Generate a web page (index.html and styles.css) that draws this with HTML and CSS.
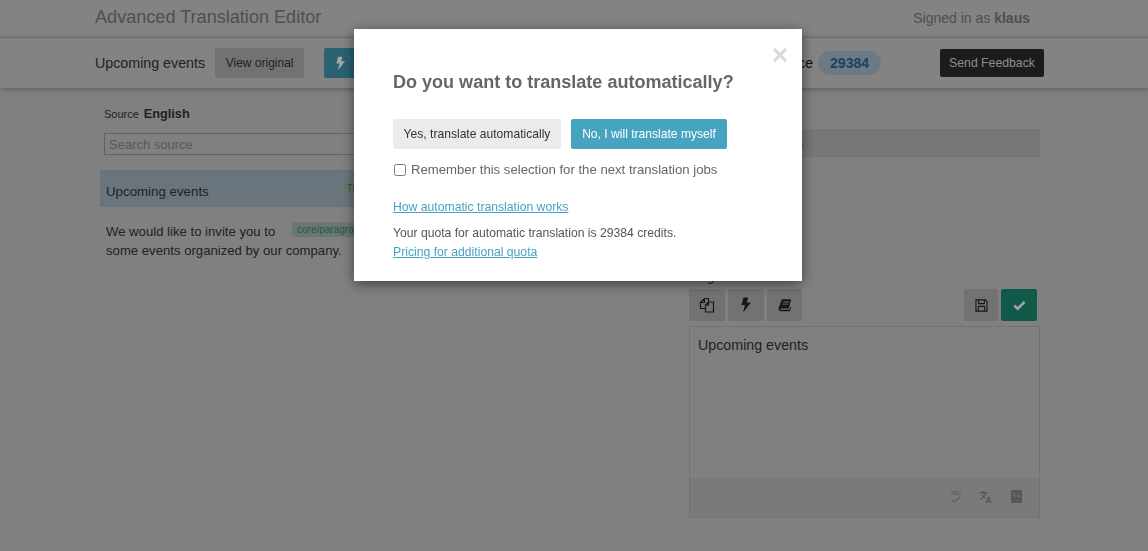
FILE: index.html
```html
<!DOCTYPE html>
<html lang="en">
<head>
    <meta charset="UTF-8">
    <meta name="viewport" content="width=device-width, initial-scale=1.0">
    <title>Advanced Translation Editor</title>
    <link rel="stylesheet" href="styles.css">
</head>
<body>
    <header class="top-header">
        <h1 class="app-title">Advanced Translation Editor</h1>
        <p class="signed-in">Signed in as <strong>klaus</strong></p>
    </header>

    <section class="job-bar">
        <div class="job-left">
            <span class="job-name">Upcoming events</span>
            <button class="btn btn-grey">View original</button>
            <button class="btn btn-auto">
                <svg class="icon-light" viewBox="0 0 12 16" width="11" height="15"><path d="M8 0.500H3.500L1.500 8H5L3 15.500 11 5.500H6.800z"/></svg>
                Translate
            </button>
        </div>
        <div class="job-right">
            <span class="quota-label">Balance</span>
            <span class="quota-pill">29384</span>
            <button class="btn btn-dark">Send Feedback</button>
        </div>
    </section>

    <main class="workspace">
        <section class="source-col">
            <div class="source-head">
                <span class="source-label">Source</span>
                <strong class="source-lang">English</strong>
            </div>
            <input class="search" type="text" placeholder="Search source">
            <div class="segment segment-active">
                <span>Upcoming events</span>
                <span class="tag tag-title">Title</span>
            </div>
            <div class="segment">
                <span class="segment-text">We would like to invite you to<br>some events organized by our company.</span>
                <span class="tag">core/paragraph</span>
            </div>
        </section>

        <section class="target-col">
            <div class="target-bar"><a href="#">Suggestions</a></div>
            <p class="target-label">Target</p>
            <div class="tools">
                <div class="tools-group">
                    <button class="tool">
                        <svg viewBox="0 0 16 16" width="16" height="16"><path class="stroke" d="M5.500 1.500H9.500V5M5.500 1.500 1.500 5.500V11.500H6.500M5.500 1.500V5.500H1.500M9.500 5H14.500V15H6.500V8zM9.500 5V8H6.500"/></svg>
                    </button>
                    <button class="tool">
                        <svg viewBox="0 0 12 16" width="12" height="16"><path d="M8 0.500H3.500L1.500 8H5L3 15.500 11 5.500H6.800z"/></svg>
                    </button>
                    <button class="tool tool-narrow">
                        <svg viewBox="0 0 16 16" width="14" height="14"><path d="M4.500 1.500H15l-2.800 10.500H3.400c-.9 0-1 1.500 0 1.500H13l1-3.500 1 .5-1.500 4.500H2.700C1 14.500.3 13 .8 11zM6 4v1h6.300l.3-1zM5.300 6.500v1h6.300l.3-1z"/></svg>
                    </button>
                </div>
                <div class="tools-group">
                    <button class="tool tool-save">
                        <svg viewBox="0 0 14 14" width="13" height="13"><path class="stroke" d="M1 1h10l2 2v10H1zM4 1v4h6V1M3.500 13V8h7v5"/></svg>
                    </button>
                    <button class="tool tool-ok">
                        <svg class="icon-light" viewBox="0 0 14 12" width="13" height="11"><path d="M5 11.500 0.500 7l2-2L5 7.500 11.500 1l2 2z"/></svg>
                    </button>
                </div>
            </div>
            <div class="editor">
                <div class="editor-text">Upcoming events</div>
                <div class="editor-foot">
                    <span class="spell"><small>ABC</small>
                        <svg viewBox="0 0 12 8" width="10" height="7"><path class="stroke" d="M1 4l3 3 7-6"/></svg>
                    </span>
                    <svg viewBox="0 0 16 16" width="14" height="14"><path class="stroke" d="M1 3h8M5 1v2M7.500 3C7 6 4.500 9 1.500 10.500M3 5c1 2 3 4 4.500 4.500M8 15l3-7 3 7M9 13h4"/></svg>
                    <span class="glossary">A-1</span>
                </div>
            </div>
        </section>
    </main>

    <div class="backdrop"></div>

    <div class="modal">
        <button class="modal-close" aria-label="Close">
            <svg viewBox="0 0 14 14" width="14" height="14"><path d="M1 1l12 12M13 1 1 13"/></svg>
        </button>
        <h2 class="modal-title">Do you want to translate automatically?</h2>
        <div class="modal-actions">
            <button class="btn btn-light">Yes, translate automatically</button>
            <button class="btn btn-blue">No, I will translate myself</button>
        </div>
        <label class="remember"><input type="checkbox"> Remember this selection for the next translation jobs</label>
        <a class="modal-link how" href="#">How automatic translation works</a>
        <p class="quota-text">Your quota for automatic translation is 29384 credits.</p>
        <a class="modal-link pricing" href="#">Pricing for additional quota</a>
    </div>
</body>
</html>
```

FILE: styles.css
```css
* {
    box-sizing: border-box;
}

html, body {
    height: 100%;
}

body {
    margin: 0;
    background-color: #c5c5c5;
    color: #333;
    font-family: "Liberation Sans", Arial, sans-serif;
    font-size: 14px;
    overflow: hidden;
}

button {
    font-family: inherit;
}

svg {
    display: block;
    fill: #222;
}

svg .stroke {
    fill: none;
    stroke: #222;
    stroke-width: 1.2;
}

svg.icon-light {
    fill: #fff;
}

/* top header */
.top-header {
    display: flex;
    align-items: center;
    justify-content: space-between;
    height: 38px;
    padding: 0 118px 2px 95px;
    border-bottom: 1px solid #b4b4b4;
    background-color: #c9c9c9;
}

.app-title {
    margin: 0;
    font-size: 18.1px;
    font-weight: normal;
    color: #7a7a7a;
}

.signed-in {
    margin: 0;
    font-size: 14px;
    color: #7a7a7a;
}

/* job bar */
.job-bar {
    display: flex;
    align-items: center;
    justify-content: space-between;
    height: 50px;
    padding: 0 104px 0 95px;
    background-color: #cacaca;
    box-shadow: 0 1px 6px rgba(0, 0, 0, 0.3);
}

.job-left, .job-right {
    display: flex;
    align-items: center;
}

.job-name {
    font-size: 14.25px;
    color: #333;
}

.btn {
    border: none;
    border-radius: 2px;
    height: 30px;
    padding: 0 11px;
    font-size: 12px;
    cursor: pointer;
}

.btn-grey {
    width: 89px;
    margin-left: 10px;
    padding: 0;
    background-color: #b0b0b0;
    color: #333;
}

.btn-auto {
    display: flex;
    align-items: center;
    gap: 8px;
    margin-left: 20px;
    background-color: #3f97ae;
    color: #fff;
}

.quota-label {
    font-size: 14px;
    color: #111;
}

.quota-pill {
    margin-left: 5px;
    padding: 4px 12px;
    border-radius: 13px;
    background-color: #a9bcc9;
    color: #1f6a96;
    font-size: 14px;
    font-weight: bold;
}

.btn-dark {
    width: 104px;
    height: 28px;
    margin-left: 59px;
    padding: 0;
    background-color: #2b2b2b;
    color: #d8d8d8;
    font-size: 12.25px;
}

/* two columns */
.workspace {
    display: flex;
    padding-left: 100px;
}

.source-col {
    width: 560px;
    padding-top: 19px;
}

.source-head {
    display: flex;
    align-items: baseline;
    gap: 5px;
    padding-left: 4px;
}

.source-label {
    font-size: 11px;
    color: #333;
}

.source-lang {
    font-size: 12.7px;
}

.search {
    display: block;
    width: 540px;
    height: 22px;
    margin: 12px 0 15px 4px;
    padding: 0 4px;
    border: 1px solid #999;
    background-color: #c5c5c5;
    font-family: inherit;
    font-size: 13px;
}

.search::placeholder {
    color: #888;
}

.segment {
    display: flex;
    padding: 15px 6px 0;
    font-size: 13.15px;
    line-height: 19px;
}

.segment-active {
    align-items: center;
    height: 37px;
    padding: 5px 6px 0;
    background-color: #a3b3bf;
    font-size: 13.3px;
}

.segment-text {
    width: 186px;
    white-space: nowrap;
}

.tag {
    align-self: flex-start;
    padding: 0 5px;
    border-radius: 3px;
    background-color: #a3b8ae;
    color: #2f8a6a;
    font-size: 10px;
    line-height: 15px;
}

.tag-title {
    margin-left: 133px;
    align-self: center;
    margin-top: -5px;
}

.target-col {
    width: 351px;
    margin-left: 29px;
    padding-top: 41px;
}

.target-bar {
    height: 28px;
    padding: 8px 0 0 48px;
    background-color: #b6b6b6;
    font-size: 12px;
}

.target-bar a {
    color: #2a7aa8;
    text-decoration: none;
}

.target-label {
    margin: 112px 0 0;
    height: 20px;
    font-size: 13px;
}

.tools {
    display: flex;
    justify-content: space-between;
    padding-right: 3px;
}

.tools-group {
    display: flex;
    gap: 3px;
}

.tool {
    display: flex;
    align-items: center;
    justify-content: center;
    width: 36px;
    height: 32px;
    padding: 0;
    border: none;
    border-radius: 2px;
    background-color: #b0b0b0;
}

.tool-narrow {
    width: 35px;
}

.tool-save {
    width: 34px;
}

.tool-ok {
    background-color: #1b8a72;
}

.editor {
    margin-top: 5px;
    height: 192px;
    border: 1px solid #b0b0b0;
    display: flex;
    flex-direction: column;
}

.editor-text {
    flex: 1;
    padding: 10px 8px;
    font-size: 14.25px;
    line-height: 17px;
}

.editor-foot {
    display: flex;
    align-items: center;
    justify-content: flex-end;
    gap: 18px;
    height: 39px;
    padding: 0 17px 3px 0;
    border-top: 1px solid #b8b8b8;
    background-color: #bcbcbc;
}

.editor-foot svg {
    opacity: 0.4;
}

.spell {
    display: flex;
    flex-direction: column;
    align-items: center;
}

.spell small {
    font-size: 5px;
    line-height: 6px;
    color: #888;
}

.glossary {
    width: 11px;
    height: 13px;
    border-bottom: 2px solid #888;
    background-color: #888;
    color: #bbb;
    font-size: 5px;
    line-height: 10px;
    text-align: center;
}

/* modal */
.backdrop {
    position: fixed;
    inset: 0;
    background-color: rgba(0, 0, 0, 0.35);
}

.modal {
    position: fixed;
    top: 29px;
    left: 354px;
    width: 448px;
    height: 252px;
    padding: 41px 39px 0;
    background-color: #fff;
    box-shadow: 0 3px 12px rgba(0, 0, 0, 0.5);
}

.modal-close {
    position: absolute;
    top: 19px;
    right: 15px;
    padding: 0;
    border: none;
    background: none;
}

.modal-close svg path {
    fill: none;
    stroke: #d8d8d8;
    stroke-width: 3;
}

.modal-title {
    margin: 0;
    font-size: 18.05px;
    line-height: 24px;
    font-weight: bold;
    color: #666;
}

.modal-actions {
    display: flex;
    gap: 10px;
    margin-top: 25px;
}

.btn-light {
    width: 168px;
    padding: 0;
    background-color: #ebebeb;
    color: #333;
    font-size: 12.1px;
}

.btn-blue {
    width: 156px;
    padding: 0;
    background-color: #47a4c0;
    color: #fff;
    font-size: 12.1px;
}

.remember {
    display: flex;
    align-items: center;
    gap: 5px;
    margin-top: 12px;
    color: #666;
    font-size: 13.17px;
    line-height: 18px;
}

.remember input {
    width: 12px;
    height: 12px;
    margin: 0 0 0 1px;
}

.modal-link {
    display: block;
    color: #47a4c0;
    font-size: 12.2px;
    line-height: 18px;
}

.how {
    margin-top: 19px;
}

.quota-text {
    margin: 8px 0 0;
    color: #555;
    font-size: 12.17px;
    line-height: 18px;
}

.pricing {
    margin-top: 1px;
}
```
